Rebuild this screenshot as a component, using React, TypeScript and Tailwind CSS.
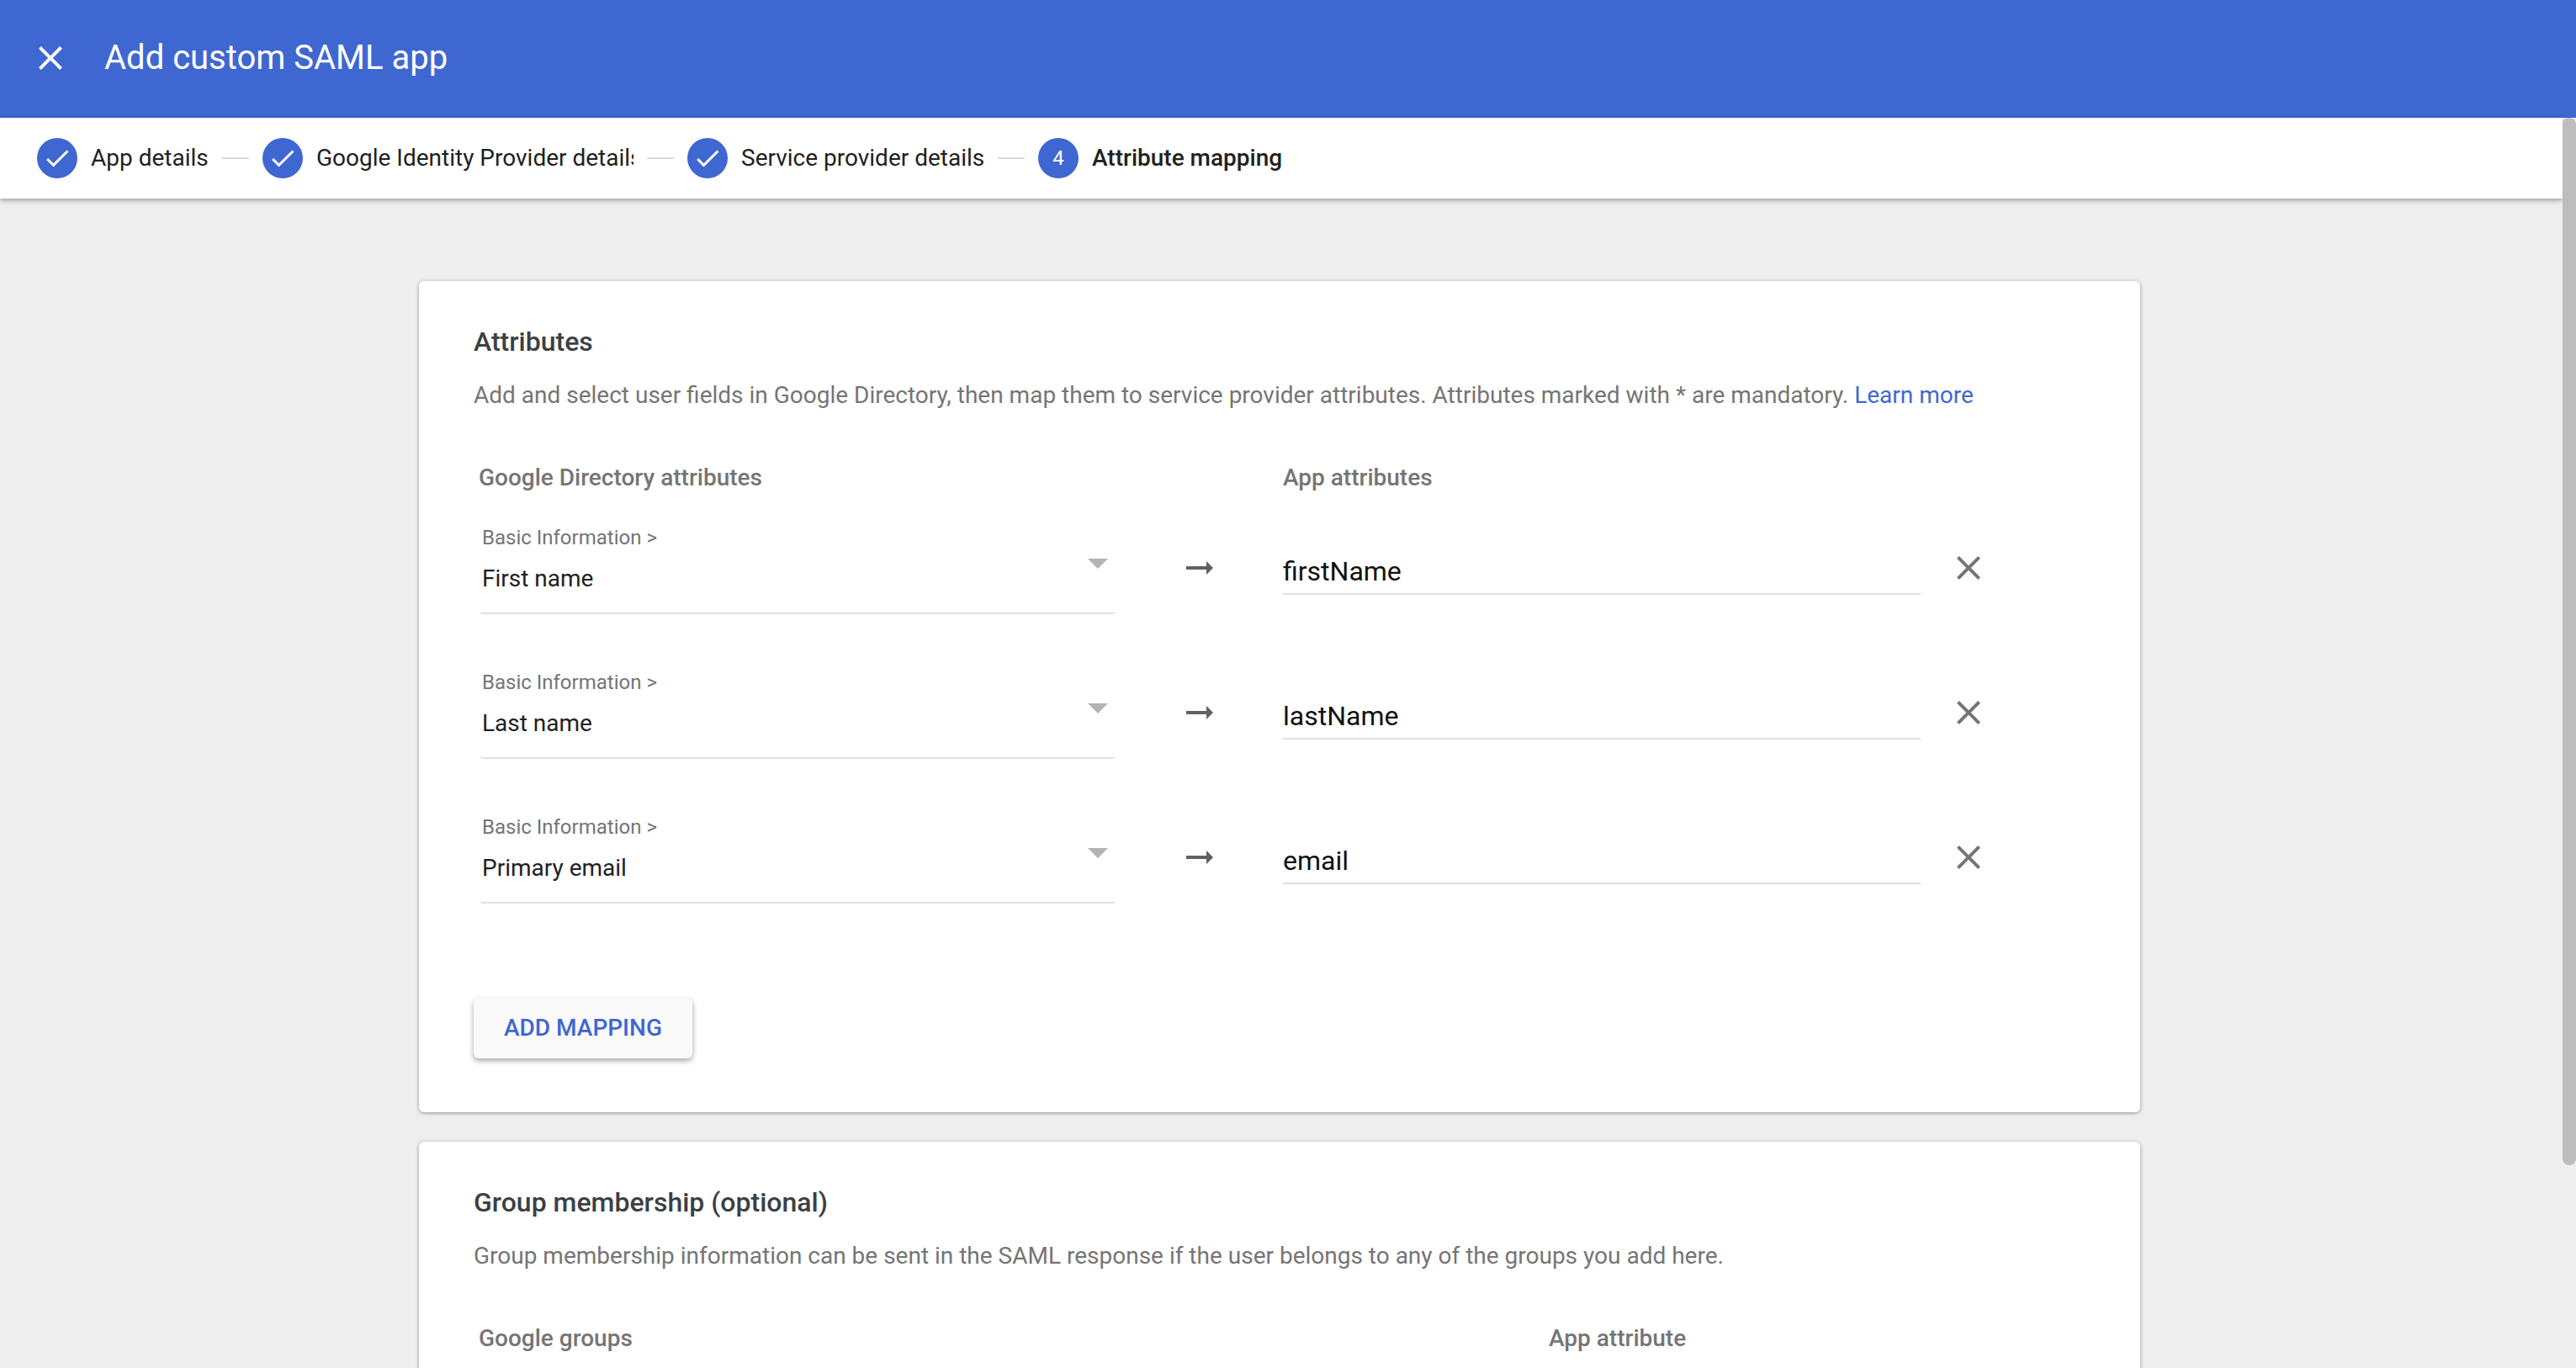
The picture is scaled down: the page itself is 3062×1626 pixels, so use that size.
const CLOSE = "M19 6.41L17.59 5 12 10.59 6.41 5 5 6.41 10.59 12 5 17.59 6.41 19 12 13.41 17.59 19 19 17.59 13.41 12z";

const STEPS = [
  { label: "App details", width: "w-[140px]" },
  { label: "Google Identity Provider details", width: "w-[377px]" },
  { label: "Service provider details", width: "w-[289px]" },
];

const MAPPINGS = [
  { field: "First name", attribute: "firstName" },
  { field: "Last name", attribute: "lastName" },
  { field: "Primary email", attribute: "email" },
];

function Step({ label, width }: { label: string; width: string }) {
  return (
    <>
      <div className="w-12 h-12 rounded-full bg-[#3f67d1] flex items-center justify-center shrink-0">
        <svg viewBox="0 0 24 24" className="w-9 h-9 fill-white">
          <path d="M9 16.17L4.83 12l-1.42 1.41L9 19 21 7l-1.41-1.41z" />
        </svg>
      </div>
      <div className={`ml-4 ${width} overflow-hidden whitespace-nowrap text-[28px] text-[#212121] shrink-0`}>{label}</div>
      <div className="w-8 h-[2px] bg-[#dcdcdc] mx-4 shrink-0" />
    </>
  );
}

function MappingRow({ field, attribute }: { field: string; attribute: string }) {
  return (
    <div className="flex h-[172px]">
      <div className="ml-[7px] w-[756px] h-[114px] border-b-2 border-[#e0e0e0] rounded-b-[4px] relative pl-[3px] pt-[5px]">
        <div className="text-[24px] leading-[36px] text-[#757575]">Basic Information &gt;</div>
        <div className="text-[28px] leading-[40px] mt-[11px] text-[#212121]">{field}</div>
        <svg viewBox="0 0 24 12" className="absolute right-[9px] top-[48px] w-6 h-3 fill-[#b3b3b3]">
          <path d="M0 0h24L12 12z" />
        </svg>
      </div>
      <svg viewBox="0 0 24 24" className="ml-[76px] mt-[35px] w-12 h-12 fill-[#616161] shrink-0">
        <path d="M16.01 11H4v2h12.01v3L20 12l-3.99-4z" />
      </svg>
      <div className="ml-[75px] w-[758px] h-[91px] border-b-2 border-[#e0e0e0] text-[32px] leading-[44px] pt-[41px] text-[#111111]">
        {attribute}
      </div>
      <svg viewBox="0 0 24 24" className="ml-[33px] mt-[35px] w-12 h-12 fill-[#757575] shrink-0">
        <path d={CLOSE} />
      </svg>
    </div>
  );
}

export default function App() {
  return (
    <div className="w-[3062px] h-[1626px] overflow-hidden bg-[#eeeeee] relative font-['Roboto',sans-serif]">
      <header className="h-[140px] bg-[#3f67d1] flex items-center pl-9 pb-[2px] text-white">
        <svg viewBox="0 0 24 24" className="w-12 h-12 fill-white shrink-0">
          <path d={CLOSE} />
        </svg>
        <h1 className="ml-10 text-[40px] leading-none">Add custom SAML app</h1>
      </header>

      <nav className="w-[3046px] h-[96px] bg-white flex items-center pl-11 shadow-[0_2px_6px_rgba(0,0,0,0.35)] relative">
        {STEPS.map((step) => (
          <Step key={step.label} label={step.label} width={step.width} />
        ))}
        <div className="w-12 h-12 rounded-full bg-[#3f67d1] flex items-center justify-center text-white text-[24px] shrink-0">4</div>
        <div className="ml-4 text-[28px] font-medium text-[#212121] whitespace-nowrap">Attribute mapping</div>
      </nav>

      <main className="pt-[98px] pl-[498px]">
        <section className="w-[2046px] h-[988px] bg-white rounded-[6px] shadow-[0_1px_4px_rgba(0,0,0,0.4)] pt-[50px] pl-[65px]">
          <h2 className="text-[32px] leading-[44px] font-medium text-[#3c4043]">Attributes</h2>
          <p className="mt-[22px] text-[28px] leading-[40px] text-[#757575] whitespace-nowrap">
            Add and select user fields in Google Directory, then map them to service provider attributes. Attributes marked with * are mandatory.{" "}
            <span className="text-[#3f67d1]">Learn more</span>
          </p>
          <div className="flex mt-[58px] h-[40px] text-[28px] leading-[40px] font-medium text-[#757575]">
            <div className="ml-[6px] w-[956px]">Google Directory attributes</div>
            <div>App attributes</div>
          </div>
          <div className="mt-[28px]">
            {MAPPINGS.map((mapping) => (
              <MappingRow key={mapping.field} field={mapping.field} attribute={mapping.attribute} />
            ))}
          </div>
          <button className="block mt-[54px] w-[260px] h-[72px] bg-[#fafafa] rounded-[6px] shadow-[0_3px_6px_rgba(0,0,0,0.35)] text-[28px] font-medium text-[#3f67d1]">
            ADD MAPPING
          </button>
        </section>

        <section className="mt-[35px] w-[2046px] h-[400px] bg-white rounded-[6px] shadow-[0_1px_4px_rgba(0,0,0,0.4)] pt-[50px] pl-[65px]">
          <h2 className="text-[32px] leading-[44px] font-medium text-[#3c4043]">Group membership (optional)</h2>
          <p className="mt-[22px] text-[28px] leading-[40px] text-[#757575] whitespace-nowrap">
            Group membership information can be sent in the SAML response if the user belongs to any of the groups you add here.
          </p>
          <div className="flex mt-[58px] text-[28px] leading-[40px] font-medium text-[#757575]">
            <div className="ml-[6px] w-[1272px]">Google groups</div>
            <div>App attribute</div>
          </div>
        </section>
      </main>

      <div className="absolute right-0 top-[140px] w-4 h-[1245px] bg-[#bdbdbd] rounded-[8px]" />
    </div>
  );
}
